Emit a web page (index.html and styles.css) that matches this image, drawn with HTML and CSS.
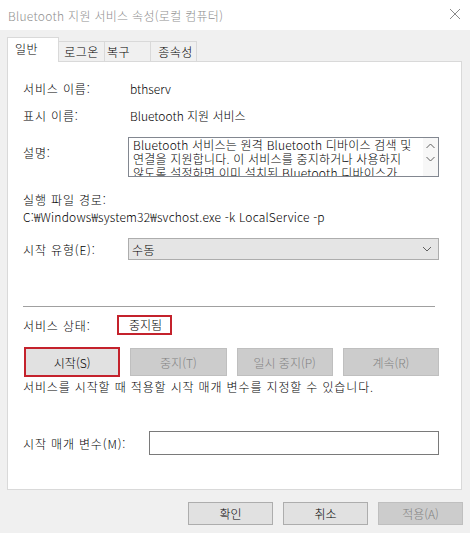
FILE: index.html
```html
<!DOCTYPE html>
<html lang="ko">
<head>
    <meta charset="UTF-8">
    <title>Bluetooth 지원 서비스 속성(로컬 컴퓨터)</title>
    <link rel="stylesheet" href="styles.css">
</head>
<body>
    <div class="window">
        <div class="titlebar">
            <span class="title">Bluetooth 지원 서비스 속성(로컬 컴퓨터)</span>
            <svg class="close" width="12" height="12" viewBox="0 0 12 12">
                <path d="M1 1 L11 11 M11 1 L1 11" stroke="#8a8a8a" stroke-width="1" fill="none"/>
            </svg>
        </div>

        <div class="tabs">
            <div class="tab active">일반</div>
            <div class="tab tab-logon">로그온</div>
            <div class="tab tab-recover">복구</div>
            <div class="tab tab-deps">종속성</div>
        </div>

        <div class="panel">
            <div class="row row-name">
                <span class="label ko">서비스 이름:</span>
                <span class="value">bthserv</span>
            </div>
            <div class="row row-display">
                <span class="label ko">표시 이름:</span>
                <span class="value">Bluetooth 지원 서비스</span>
            </div>
            <div class="row row-desc">
                <span class="label desc-label ko">설명:</span>
                <div class="desc-box">
                    <div class="desc-text">
                        Bluetooth 서비스는 원격 Bluetooth 디바이스 검색 및<br>
                        연결을 지원합니다. 이 서비스를 중지하거나 사용하지<br>
                        않도록 설정하면 이미 설치된 Bluetooth 디바이스가
                    </div>
                    <div class="scrollbar">
                        <svg width="9" height="6" viewBox="0 0 9 6"><path d="M0.5 5 L4.5 1 L8.5 5" stroke="#606060" fill="none"/></svg>
                        <svg width="9" height="6" viewBox="0 0 9 6"><path d="M0.5 1 L4.5 5 L8.5 1" stroke="#606060" fill="none"/></svg>
                    </div>
                </div>
            </div>
            <div class="path-label ko">실행 파일 경로:</div>
            <div class="path">C:₩Windows₩system32₩svchost.exe -k LocalService -p</div>
            <div class="row row-type">
                <span class="label ko">시작 유형(E):</span>
                <div class="select">
                    <span>수동</span>
                    <svg width="10" height="6" viewBox="0 0 10 6"><path d="M1 1 L5 5 L9 1" stroke="#606060" fill="none"/></svg>
                </div>
            </div>

            <div class="divider"></div>

            <div class="row row-status">
                <span class="label ko">서비스 상태:</span>
                <span class="status">중지됨</span>
            </div>
            <div class="actions">
                <button class="btn btn-start">시작(S)</button>
                <button class="btn" disabled>중지(T)</button>
                <button class="btn" disabled>일시 중지(P)</button>
                <button class="btn" disabled>계속(R)</button>
            </div>
            <div class="hint ko">서비스를 시작할 때 적용할 시작 매개 변수를 지정할 수 있습니다.</div>
            <div class="row row-params">
                <span class="label ko">시작 매개 변수(M):</span>
                <div class="input"></div>
            </div>
        </div>

        <div class="footer">
            <button class="btn btn-footer">확인</button>
            <button class="btn btn-footer">취소</button>
            <button class="btn btn-footer" disabled>적용(A)</button>
        </div>
    </div>
</body>
</html>
```

FILE: styles.css
```css
body {
    margin: 0;
    background: #f0f0f0;
    font-family: "Noto Sans CJK KR", "Open Sans", sans-serif;
    font-size: 12px;
    font-weight: 300;
    color: #000;
}
.ko {
    letter-spacing: 0.85px;
}
.window {
    width: 470px;
    height: 533px;
    overflow: hidden;
}
.titlebar {
    height: 30px;
    background: #fff;
    display: flex;
    align-items: center;
    justify-content: space-between;
    padding: 0 9px 0 8px;
}
.title {
    color: #8f8f8f;
    font-size: 12px;
    letter-spacing: 0.3px;
}
.close {
    margin-top: -2px;
}

/* tabs */
.tabs {
    display: flex;
    align-items: flex-end;
    margin-top: 7px;
    padding-left: 7px;
    height: 24px;
}
.tab {
    height: 20px;
    line-height: 19px;
    border: 1px solid #d9d9d9;
    border-bottom: none;
    box-sizing: border-box;
    background: #f0f0f0;
    width: 47px;
    text-align: center;
    margin-left: -1px;
    letter-spacing: 0.5px;
}
.tab.active {
    height: 25px;
    width: 52px;
    margin-left: 0;
    background: #fff;
    position: relative;
    z-index: 1;
    margin-bottom: -1px;
    line-height: 22px;
    text-align: left;
    padding-left: 7px;
}
.tab-recover {
    text-align: left;
    padding-left: 2px;
}
.tab-deps {
    padding-left: 4px;
}

/* panel */
.panel {
    margin: 0 8px 0 7px;
    height: 429px;
    box-sizing: border-box;
    background: #fff;
    border: 1px solid #d9d9d9;
    padding: 0 22px 0 15px;
}
.row {
    display: flex;
    align-items: center;
}
.label {
    width: 107px;
    flex-shrink: 0;
}
.row-name {
    margin-top: 16px;
    height: 20px;
}
.row-display {
    margin-top: 7px;
    height: 20px;
}
.row-desc {
    margin-top: 12px;
    align-items: flex-start;
}
.desc-label {
    width: 105px;
    line-height: 16px;
    padding-top: 8px;
}
.desc-box {
    flex: 1;
    height: 40px;
    box-sizing: border-box;
    border: 1px solid #828790;
    display: flex;
    overflow: hidden;
}
.desc-text {
    flex: 1;
    padding: 0 0 0 4px;
    line-height: 14px;
    white-space: nowrap;
    overflow: hidden;
    letter-spacing: 0.2px;
}
.scrollbar {
    width: 15px;
    background: #f7f7f7;
    display: flex;
    flex-direction: column;
    align-items: center;
    gap: 7px;
    padding-top: 5px;
}
.path-label {
    margin-top: 14px;
    line-height: 17px;
}
.path {
    line-height: 17px;
    letter-spacing: 0.2px;
}
.row-type {
    margin-top: 13px;
}
.row-type .label {
    width: 105px;
}
.select {
    flex: 1;
    height: 22px;
    box-sizing: border-box;
    background: #e5e5e5;
    border: 1px solid #adadad;
    display: flex;
    align-items: center;
    justify-content: space-between;
    padding: 0 6px 0 3px;
    letter-spacing: 0.5px;
}
.divider {
    margin: 46px 4px 0 0;
    border-top: 1px solid #a0a0a0;
}
.row-status {
    margin-top: 8px;
    height: 20px;
}
.row-status .label {
    width: 94px;
}
.status {
    border: 2px solid #c4222c;
    height: 20px;
    box-sizing: border-box;
    line-height: 16px;
    padding: 0 8px 0 10px;
}

/* buttons */
.btn {
    font-family: inherit;
    font-size: 12px;
    font-weight: 300;
    color: #000;
    background: #e1e1e1;
    border: 1px solid #adadad;
    padding: 0;
    margin: 0;
}
.btn:disabled {
    background: #cccccc;
    border-color: #bfbfbf;
    color: #838383;
}
.actions {
    display: grid;
    grid-template-columns: repeat(4, 1fr);
    column-gap: 10px;
    margin-top: 13px;
    margin-left: 1px;
    height: 28px;
}
.btn-start {
    border: 2px solid #c4222c;
    margin: -1px 0;
}
.hint {
    margin-top: 3px;
    line-height: 16px;
}
.row-params {
    margin-top: 36px;
}
.row-params .label {
    width: 126px;
}
.input {
    flex: 1;
    height: 24px;
    box-sizing: border-box;
    border: 1px solid #7a7a7a;
    background: #fff;
}

/* footer */
.footer {
    display: flex;
    justify-content: flex-end;
    gap: 10px;
    padding: 12px 7px 0 0;
}
.btn-footer {
    width: 85px;
    height: 23px;
}
```
